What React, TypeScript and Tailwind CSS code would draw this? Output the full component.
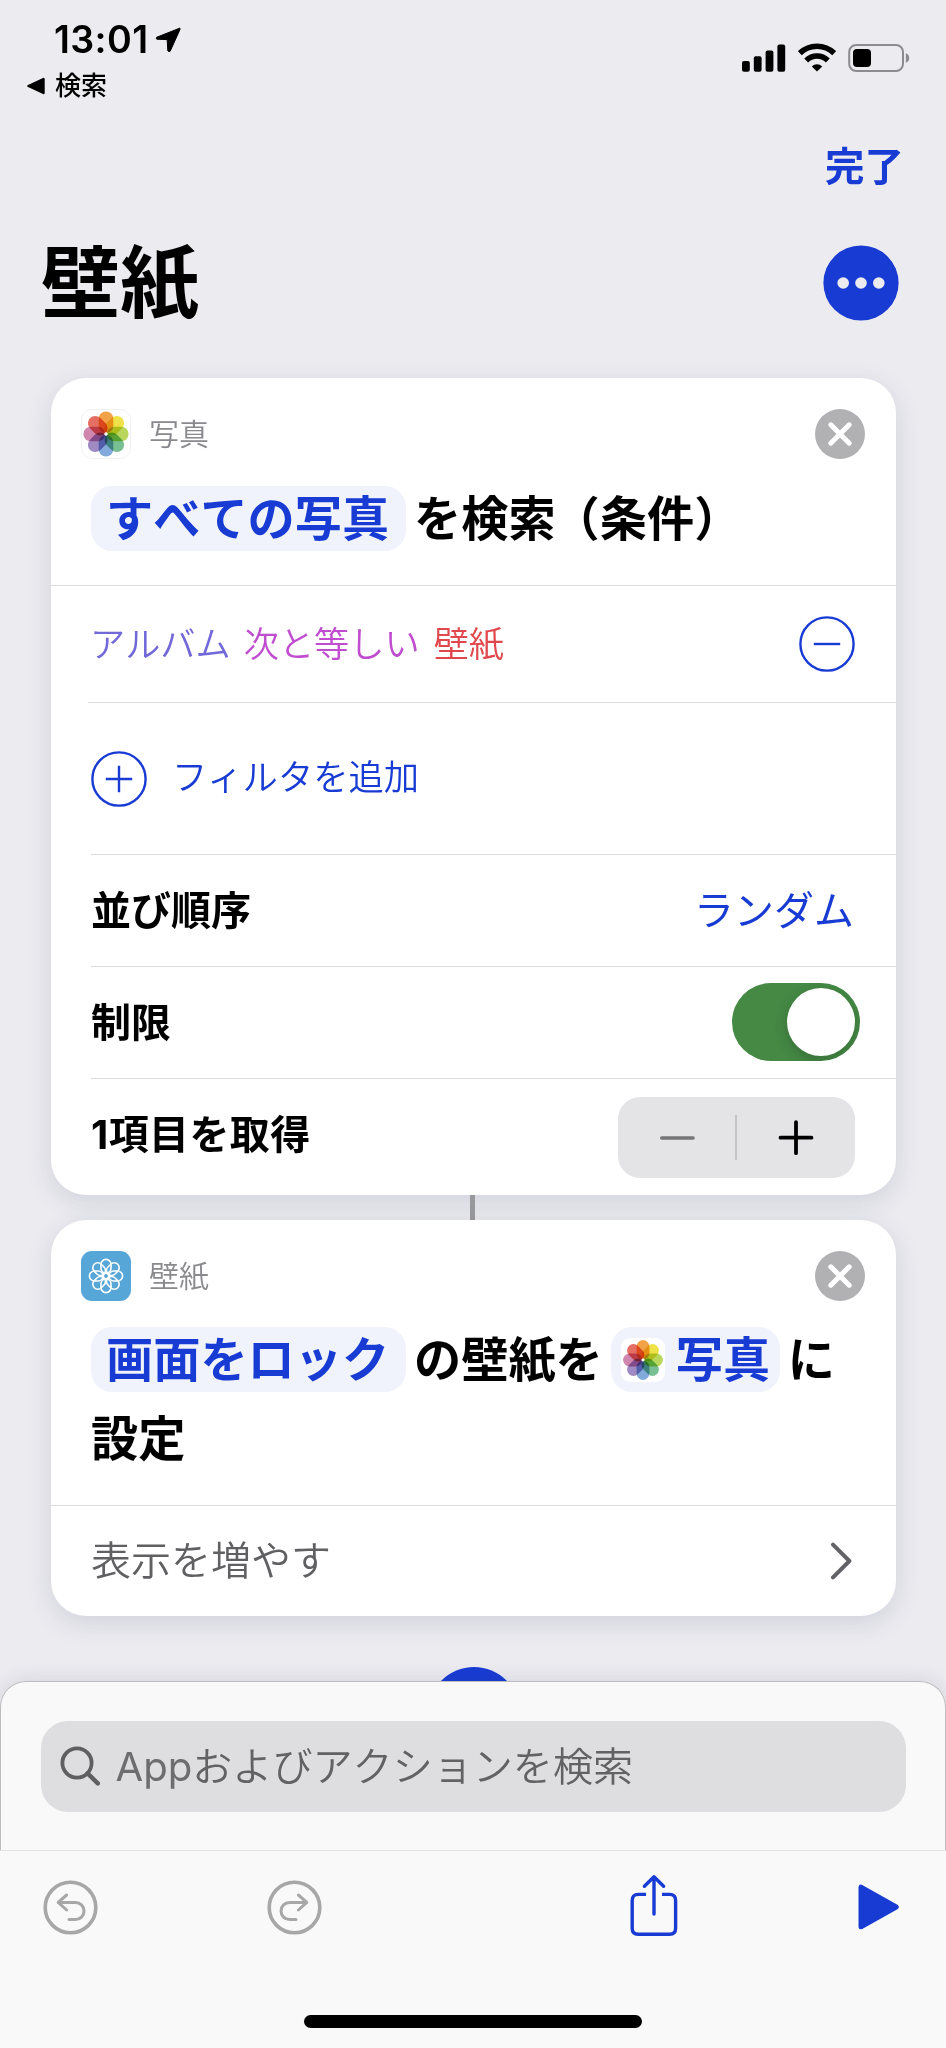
import type { ReactNode } from "react";

const FONT = "font-['Inter','Noto_Sans_CJK_JP',sans-serif] [font-kerning:none]";

const PETALS = [
  "#f3a347",
  "#efe148",
  "#b9d75c",
  "#78c093",
  "#82abdc",
  "#9f8ac3",
  "#cf87b0",
  "#e66f64",
];

function PhotosFlower({ className }: { className: string }) {
  return (
    <svg viewBox="0 0 50 50" className={className}>
      <g className="isolate">
        {PETALS.map((color, i) => (
          <rect
            key={color}
            x="17.7"
            y="2.4"
            width="14.6"
            height="21.8"
            rx="7.3"
            fill={color}
            transform={`rotate(${i * 45} 25 25)`}
            className="mix-blend-multiply"
          />
        ))}
      </g>
      <circle cx="25" cy="25" r="1.7" fill="#fff" />
    </svg>
  );
}

function WallpaperIcon() {
  return (
    <svg viewBox="0 0 50 50" className="size-[50px] rounded-[11px] bg-[#57a6d8]">
      <g fill="none" stroke="#fff" strokeWidth="1.6">
        {PETALS.map((color, i) => (
          <rect
            key={color}
            x="20"
            y="8.4"
            width="10"
            height="13.8"
            rx="5"
            transform={`rotate(${i * 45} 25 25)`}
          />
        ))}
        <circle cx="25" cy="25" r="2.8" />
      </g>
    </svg>
  );
}

function StatusBar() {
  return (
    <header className="flex h-[110px] justify-between">
      <div className="flex flex-col pt-[22px] pl-[27px]">
        <div className="flex h-9 items-center gap-[7px] pl-[27px]">
          <span className="text-[37.6px] leading-9 font-semibold tracking-[0.4px] text-black">13:01</span>
          <svg viewBox="0 0 26 26" className="size-[26px]">
            <path
              d="M24.6 1.2 1.6 10.3Q1 11.6 1.8 12.2L12.2 12.6 12.8 23.8Q14 25.4 15.2 24.2L25 2.4Q25.4 1 24.6 1.2Z"
              stroke="#000"
              strokeWidth="1"
              strokeLinejoin="round"
            />
          </svg>
        </div>
        <div className="flex h-14 items-center gap-[10px] pt-[4px]">
          <svg viewBox="0 0 18 18" className="size-[18px]">
            <path d="M1.5 9 16.5 2V16Z" stroke="#000" strokeWidth="2.4" strokeLinejoin="round" />
          </svg>
          <span className="text-[26px] leading-9 font-medium text-black">検索</span>
        </div>
      </div>
      <div className="flex items-start gap-3 pt-[43px] pr-[35px]">
        <svg viewBox="0 0 44 29" className="h-[29px] w-11">
          <rect x="0" y="18" width="7.8" height="10.8" rx="2" />
          <rect x="11.8" y="13.2" width="7.8" height="15.6" rx="2" />
          <rect x="23.6" y="7.4" width="7.8" height="21.4" rx="2" />
          <rect x="35.4" y="1.4" width="7.8" height="27.4" rx="2" />
        </svg>
        <svg viewBox="0 0 38 29" className="h-[29px] w-[38px]">
          <g fill="none" stroke="#000" strokeWidth="5.6">
            <path d="M1.8 10.2A24.6 24.6 0 0 1 36.2 10.2" />
            <path d="M8.2 17.4A15.4 15.4 0 0 1 29.8 17.4" />
          </g>
          <path d="M19 28.6 13.8 23.4A7.4 7.4 0 0 1 24.2 23.4Z" />
        </svg>
        <svg viewBox="0 0 63 29" className="h-[29px] w-[63px]">
          <rect x="1.2" y="2" width="53.8" height="26" rx="7" fill="none" stroke="#8c8c90" strokeWidth="2" />
          <rect x="5" y="6" width="18" height="18" rx="4" />
          <path d="M57.8 10.2Q61.2 11.4 61.2 15T57.8 19.8Z" fill="#8c8c90" />
        </svg>
      </div>
    </header>
  );
}

function Card({ children }: { children: ReactNode }) {
  return (
    <section className="shrink-0 overflow-hidden rounded-[35px] bg-white shadow-[0_7px_26px_rgba(60,60,90,0.14)]">
      {children}
    </section>
  );
}

function CardHead({ icon, title }: { icon: ReactNode; title: string }) {
  return (
    <div className="flex items-center pt-[31px] pr-[31px] pl-[30px]">
      {icon}
      <span className="ml-[18px] text-[30px] leading-[50px] font-[350] text-[#8a8a8e]">{title}</span>
      <svg viewBox="0 0 50 50" className="ml-auto size-[50px]">
        <circle cx="25" cy="25" r="25" fill="#b1b1b3" />
        <path d="M15.8 15.8 34.2 34.2M34.2 15.8 15.8 34.2" stroke="#fff" strokeWidth="5" strokeLinecap="round" />
      </svg>
    </div>
  );
}

function Token({ children, className }: { children: ReactNode; className: string }) {
  return (
    <span className={`flex h-[65px] items-center rounded-[21px] bg-[#f0f3fc] text-[#183bd3] ${className}`}>
      {children}
    </span>
  );
}

function Row({ label, children, className }: { label: ReactNode; children: ReactNode; className: string }) {
  return (
    <div className={`ml-10 flex items-center justify-between border-t border-[#dcdcde] ${className}`}>
      <span className="text-[40px] leading-[50px] font-bold text-black">{label}</span>
      {children}
    </div>
  );
}

function SearchCard() {
  return (
    <Card>
      <CardHead
        icon={
          <span className="flex size-[50px] items-center justify-center rounded-[11px] border border-[#f1f1f3] bg-white">
            <PhotosFlower className="size-[50px] shrink-0" />
          </span>
        }
        title="写真"
      />
      <div className="mt-[27px] flex items-center pl-10 text-[47.2px] leading-[65px] font-bold">
        <Token className="w-[315px] pl-[15px]">すべての写真</Token>
        <span className="ml-2">
          を検索<span className="-ml-[3px]">（条件）</span>
        </span>
      </div>
      <div className="mt-[34px] flex h-[117px] items-center border-t border-[#dcdcde] pr-[41px] pl-10 text-[35.2px] font-[350]">
        <span className="-ml-px text-[#7268d8]">アルバム</span>
        <span className="ml-[13px] text-[#c04dd0]">次と等しい</span>
        <span className="ml-[14px] text-[#e0484e]">壁紙</span>
        <svg viewBox="0 0 56 56" className="ml-auto size-14" fill="none" stroke="#183bd3" strokeWidth="2.4">
          <circle cx="28" cy="28" r="26.6" />
          <path d="M14.8 28H41.2" />
        </svg>
      </div>
      <div className="ml-[37px] flex h-[152px] items-center border-t border-[#dcdcde] pl-[3px]">
        <svg viewBox="0 0 56 56" className="size-14" fill="none" stroke="#183bd3" strokeWidth="2.4">
          <circle cx="28" cy="28" r="26.6" />
          <path d="M14.8 28H41.2M28 14.8V41.2" />
        </svg>
        <span className="ml-[25px] text-[35.3px] font-[350] text-[#183bd3]">フィルタを追加</span>
      </div>
      <Row label="並び順序" className="h-28 pr-[42px]">
        <span className="text-[40px] leading-[50px] font-normal text-[#183bd3]">ランダム</span>
      </Row>
      <Row label="制限" className="h-28 pr-9">
        <span className="-mt-[2px] flex h-[78px] w-32 items-center justify-end overflow-hidden rounded-full bg-[#458945] pr-[5px]">
          <span className="size-[68px] rounded-full bg-white shadow-[0_4px_14px_rgba(0,0,0,0.2)]" />
        </span>
      </Row>
      <Row
        label={<span className="relative -top-[2px] tracking-[0.4px]">1項目を取得</span>}
        className="h-[117px] pr-[41px]"
      >
        <span className="flex h-[81px] w-[237px] items-center rounded-[22px] bg-[#e4e4e6]">
          <svg viewBox="0 0 117 81" className="h-[81px] w-[117px]">
            <path d="M43.8 41H75" stroke="#757578" strokeWidth="3.6" strokeLinecap="round" />
          </svg>
          <span className="h-[45px] w-[2px] bg-[#c5c5c8]" />
          <svg viewBox="0 0 118 81" className="h-[81px] w-[118px]">
            <path d="M43.5 40.7H74.5M59 25.2V56.2" stroke="#000" strokeWidth="3.8" strokeLinecap="round" />
          </svg>
        </span>
      </Row>
    </Card>
  );
}

function WallpaperCard() {
  return (
    <Card>
      <CardHead icon={<WallpaperIcon />} title="壁紙" />
      <div className="mt-[26px] flex items-center pl-10 text-[47.2px] leading-[65px] font-bold">
        <Token className="w-[315px] pl-[15px]">画面をロック</Token>
        <span className="ml-2">の壁紙を</span>
        <Token className="ml-2 w-[169px] pl-[10px]">
          <span className="flex size-11 items-center justify-center rounded-[9px] bg-white">
            <PhotosFlower className="size-11" />
          </span>
          <span className="ml-[11px]">写真</span>
        </Token>
        <span className="ml-2">に</span>
      </div>
      <div className="mt-[14px] pl-10 text-[47.2px] leading-[65px] font-bold">設定</div>
      <div className="mt-[34px] flex h-[111px] items-center justify-between border-t border-[#dcdcde] pr-[44px] pl-10">
        <span className="text-[40px] leading-[50px] font-[350] text-[#606063]">表示を増やす</span>
        <svg viewBox="0 0 22 38" className="h-[38px] w-[22px]">
          <path
            d="M3 2.6 19.4 19 3 35.4"
            fill="none"
            stroke="#636367"
            strokeWidth="4"
            strokeLinecap="round"
            strokeLinejoin="round"
          />
        </svg>
      </div>
    </Card>
  );
}

function HistoryIcon({ flipped }: { flipped: boolean }) {
  return (
    <svg
      viewBox="0 0 55 55"
      className={flipped ? "size-[55px] -scale-x-100" : "size-[55px]"}
      fill="none"
      stroke="#a7a7a8"
      strokeWidth="3.6"
      strokeLinecap="round"
      strokeLinejoin="round"
    >
      <circle cx="27.5" cy="27.5" r="25.3" />
      <path
        d="M23.6 15 15.2 22.4 23.6 30M15.2 22.4H32.4A8.6 8.6 0 0 1 32.4 39.6H26"
        strokeWidth="3"
      />
    </svg>
  );
}

function BottomSheet() {
  return (
    <footer className="relative z-10 flex h-[367px] flex-col bg-[#f9f9f9] shadow-[0_-2px_18px_rgba(60,60,90,0.12)] rounded-t-[26px]">
      <div className="flex h-[169px] items-start rounded-t-[26px] border border-b-0 border-[#bdbdc0] px-[39.5px] pt-[39px]">
        <div className="flex h-[91px] w-full items-center rounded-[27px] bg-[#dedee0] pl-[19px]">
          <svg
            viewBox="0 0 42 42"
            className="size-[42px]"
            fill="none"
            stroke="#5f5f62"
            strokeWidth="3.8"
            strokeLinecap="round"
          >
            <circle cx="17" cy="17" r="14.6" />
            <path d="M27.6 27.4 37.8 37.4" strokeWidth="4.4" />
          </svg>
          <span className="ml-[14px] text-[40.1px] leading-[50px] text-[#6d6d70]">
            App<span className="font-[350] text-[#626265]">およびアクションを検索</span>
          </span>
        </div>
      </div>
      <div className="flex h-[113px] items-center border-t border-[#e2e2e3] pl-[43px]">
        <HistoryIcon flipped={false} />
        <span className="ml-[169px] flex">
          <HistoryIcon flipped />
        </span>
        <svg
          viewBox="0 0 50 64"
          className="-mt-1 ml-[307px] h-16 w-[50px]"
          fill="none"
          stroke="#183bd3"
          strokeWidth="3.4"
          strokeLinecap="round"
          strokeLinejoin="round"
        >
          <path d="M17 21.4H9.2Q3.2 21.4 3.2 27.4V55.2Q3.2 61.2 9.2 61.2H40.6Q46.6 61.2 46.6 55.2V27.4Q46.6 21.4 40.6 21.4H33" strokeLinecap="butt" />
          <path d="M25 41V4M15.4 13.2 25 3.8 34.6 13.2" />
        </svg>
        <svg viewBox="0 0 42 46" className="ml-[178.5px] h-[46px] w-[42px]">
          <path d="M3 3.2V42.8L38.2 23Z" fill="#183bd3" stroke="#183bd3" strokeWidth="5" strokeLinejoin="round" />
        </svg>
      </div>
      <div className="mx-auto mt-[52px] h-[13px] w-[338px] rounded-full bg-black" />
    </footer>
  );
}

export default function App() {
  return (
    <div lang="ja" className={`flex h-[2048px] w-[946px] flex-col overflow-hidden bg-[#ebebf0] ${FONT}`}>
      <StatusBar />
      <div className="flex h-[114px] items-center justify-end pr-[42px]">
        <span className="text-[39.5px] leading-[50px] font-bold text-[#183bd3]">完了</span>
      </div>
      <div className="mt-[2px] flex h-[114px] items-center justify-between pr-[47px] pl-[41px]">
        <h1 className="text-[79px] leading-[100px] font-bold text-black">壁紙</h1>
        <svg viewBox="0 0 76 76" className="size-[76px]">
          <circle cx="38" cy="38" r="37.6" fill="#183bd3" />
          <g fill="#ebebf0">
            <circle cx="20.2" cy="38" r="5.8" />
            <circle cx="38" cy="38" r="5.8" />
            <circle cx="55.8" cy="38" r="5.8" />
          </g>
        </svg>
      </div>
      <main className="flex h-[1341px] flex-col overflow-hidden pt-[38px] pr-[50px] pl-[51px]">
        <SearchCard />
        <div className="ml-[419px] h-[25px] w-[5px] shrink-0 bg-[#98989d]" />
        <WallpaperCard />
        <div className="mx-auto mt-[51px] size-[92px] shrink-0 rounded-full bg-[#183bd3]" />
      </main>
      <BottomSheet />
    </div>
  );
}
